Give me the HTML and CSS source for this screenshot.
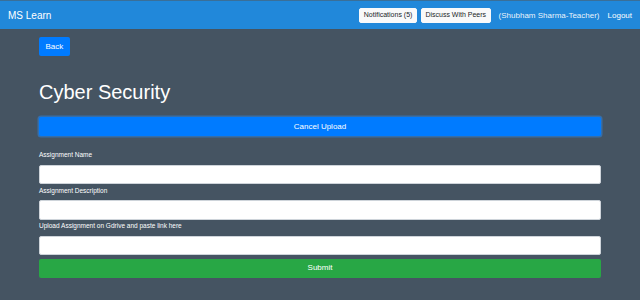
FILE: index.html
```html
<!DOCTYPE html>
<html lang="en">
<head>
  <meta charset="UTF-8">
  <meta name="viewport" content="width=device-width, initial-scale=1.0">
  <title>MS Learn</title>
  <link rel="stylesheet" href="styles.css">
</head>
<body>
<nav class="navbar">
  <a class="brand" href="#">MS Learn</a>
  <div class="nav-right">
    <button class="btn-light">Notifications (5)</button>
    <button class="btn-light">Discuss With Peers</button>
    <span class="nav-user">(Shubham Sharma-Teacher)</span>
    <a class="nav-link" href="#">Logout</a>
  </div>
</nav>

<div class="container">
  <div class="back-row">
    <button class="btn btn-primary">Back</button>
  </div>
  <h1 class="title">Cyber Security</h1>
  <button class="btn btn-primary btn-block focused">Cancel Upload</button>

  <form class="upload-form">
    <label>Assignment Name</label>
    <input type="text" class="form-control">
    <label>Assignment Description</label>
    <input type="text" class="form-control">
    <label>Upload Assignment on Gdrive and paste link here</label>
    <input type="text" class="form-control">
    <button type="button" class="btn btn-success btn-block">Submit</button>
  </form>
</div>
</body>
</html>
```

FILE: styles.css
```css
body {
  margin: 0;
  font-family: "Liberation Sans", Arial, sans-serif;
  background: #455462;
  color: white;
}

.navbar {
  height: 28px;
  border-top: 1px solid #3a6f98;
  background: #2188da;
  display: flex;
  align-items: center;
  justify-content: space-between;
  padding: 0 8px;
}

.brand {
  color: white;
  font-size: 10px;
  text-decoration: none;
}

.nav-right {
  display: flex;
  align-items: center;
}

.btn-light {
  font-family: inherit;
  font-size: 7px;
  line-height: 10px;
  padding: 1.5px 3.5px;
  border: 1px solid #f8f9fa;
  border-radius: 2px;
  background: #f8f9fa;
  color: #212529;
  margin-right: 4px;
}

.nav-user {
  font-size: 8px;
  color: rgba(255, 255, 255, 0.92);
  margin-left: 4px;
  margin-right: 8px;
}

.nav-link {
  font-size: 8px;
  color: white;
  text-decoration: none;
}

.container {
  padding: 0 39px;
}

.back-row {
  display: flex;
  padding-top: 8px;
}

.btn {
  font-family: inherit;
  font-size: 8px;
  line-height: 12px;
  padding: 3.5px 6.5px;
  border: 0;
  border-radius: 2px;
  color: white;
}

.btn-primary {
  background: #007bff;
}

.btn-success {
  background: #28a745;
}

.btn-block {
  display: block;
  width: 100%;
}

.focused {
  box-shadow: 0 0 0 1.5px rgba(38, 143, 255, 0.45);
}

.title {
  font-size: 20px;
  font-weight: normal;
  line-height: 24px;
  margin: 24px 0 13px;
}

.upload-form {
  padding-top: 14px;
}

.upload-form label {
  display: block;
  font-size: 6.5px;
  line-height: 10px;
  margin-bottom: 4.5px;
}

.form-control {
  display: block;
  box-sizing: border-box;
  width: 100%;
  height: 19.5px;
  margin: 0 0 1.5px;
  border: 1px solid #ced4da;
  border-radius: 2px;
  background: white;
}

.upload-form .btn-success {
  margin-top: 3.5px;
  padding: 3.75px 6.5px;
}
```
